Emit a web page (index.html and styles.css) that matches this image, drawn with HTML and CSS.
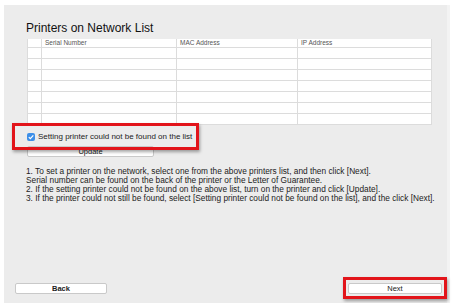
FILE: index.html
```html
<!DOCTYPE html>
<html lang="en">
<head>
  <meta charset="UTF-8">
  <title>Printers on Network List</title>
  <link rel="stylesheet" href="styles.css">
</head>
<body>
  <div class="panel">
    <h1 class="title">Printers on Network List</h1>

    <table class="list">
      <colgroup>
        <col class="c-sel"><col class="c-serial"><col class="c-mac"><col class="c-ip">
      </colgroup>
      <thead>
        <tr><th></th><th>Serial Number</th><th>MAC Address</th><th>IP Address</th></tr>
      </thead>
      <tbody>
        <tr><td></td><td></td><td></td><td></td></tr>
        <tr><td></td><td></td><td></td><td></td></tr>
        <tr><td></td><td></td><td></td><td></td></tr>
        <tr><td></td><td></td><td></td><td></td></tr>
        <tr><td></td><td></td><td></td><td></td></tr>
        <tr><td></td><td></td><td></td><td></td></tr>
        <tr><td></td><td></td><td></td><td></td></tr>
      </tbody>
    </table>

    <label class="found mark">
      <span class="check">
        <svg width="8" height="8" viewBox="0 0 8 8"><path d="M1.8 4.1 L3.3 5.6 L6.3 2.3" fill="none" stroke="#fff" stroke-width="1.2"/></svg>
      </span>
      Setting printer could not be found on the list
    </label>
    <button class="btn update">Update</button>

    <div class="notes">
      <p>1. To set a printer on the network, select one from the above printers list, and then click [Next].</p>
      <p>Serial number can be found on the back of the printer or the Letter of Guarantee.</p>
      <p>2. If the setting printer could not be found on the above list, turn on the printer and click [Update].</p>
      <p>3. If the printer could not still be found, select [Setting printer could not be found on the list], and the click [Next].</p>
    </div>

    <div class="footer">
      <button class="btn back">Back</button>
      <div class="mark next-mark">
        <button class="btn next">Next</button>
      </div>
    </div>
  </div>
</body>
</html>
```

FILE: styles.css
```css
body {
  margin: 0;
  background: #fff;
  font-family: "Liberation Sans", Arial, sans-serif;
  color: #222;
}
.panel {
  box-sizing: border-box;
  width: 446px;
  height: 298px;
  margin: 5px 0 0 4px;
  background: #ececec;
  border-right: 3px solid #f3f3f3;
  display: flex;
  flex-direction: column;
  align-items: flex-start;
}
.title {
  margin: 14px 0 0 22px;
  font-size: 12px;
  font-weight: normal;
  line-height: 18px;
  color: #111;
}
.list {
  margin: 2px 0 0 23px;
  border-collapse: collapse;
  background: #fff;
  table-layout: fixed;
  width: 404px;
}
.c-sel { width: 14px; }
.c-serial { width: 135px; }
.c-mac { width: 121px; }
.c-ip { width: 134px; }
.list th,
.list td {
  padding: 0 0 0 3px;
  border: 1px solid #dcdcdc;
  height: 10px;
}
.list th {
  height: 8px;
  font-size: 6.5px;
  font-weight: normal;
  text-align: left;
  color: #555;
  line-height: 8px;
  border-top: none;
}
.mark {
  border: 3px solid #e2141a;
  box-shadow: 1px 2px 3px rgba(0, 0, 0, 0.35);
}
.found {
  position: relative;
  z-index: 1;
  box-sizing: border-box;
  width: 187px;
  height: 27px;
  margin: -2px 0 0 8px;
  padding-left: 12px;
  display: flex;
  align-items: center;
  gap: 3px;
  font-size: 8px;
  color: #222;
  white-space: nowrap;
}
.check {
  width: 8px;
  height: 8px;
  border-radius: 2px;
  background: #3d8fe8;
  display: flex;
}
.btn {
  font-family: "Liberation Sans", Arial, sans-serif;
  font-size: 7.5px;
  color: #222;
  background: #fff;
  border: 1px solid #c9c9c9;
  border-radius: 2px;
  padding: 0;
  height: 11px;
  line-height: 9px;
}
.update {
  width: 127px;
  margin: -4px 0 0 23px;
}
.notes {
  margin: 10px 0 0 22px;
  font-size: 8.3px;
  line-height: 9px;
  color: #222;
  white-space: nowrap;
}
.notes p {
  margin: 0;
}
.footer {
  margin-top: auto;
  box-sizing: border-box;
  width: 100%;
  padding: 0 0 4px 11px;
  display: flex;
  justify-content: space-between;
  align-items: center;
}
.back {
  width: 92px;
  font-weight: bold;
}
.next-mark {
  width: 104px;
  height: 22px;
  box-sizing: border-box;
  display: flex;
  align-items: center;
  justify-content: center;
}
.next {
  width: 94px;
}
```
